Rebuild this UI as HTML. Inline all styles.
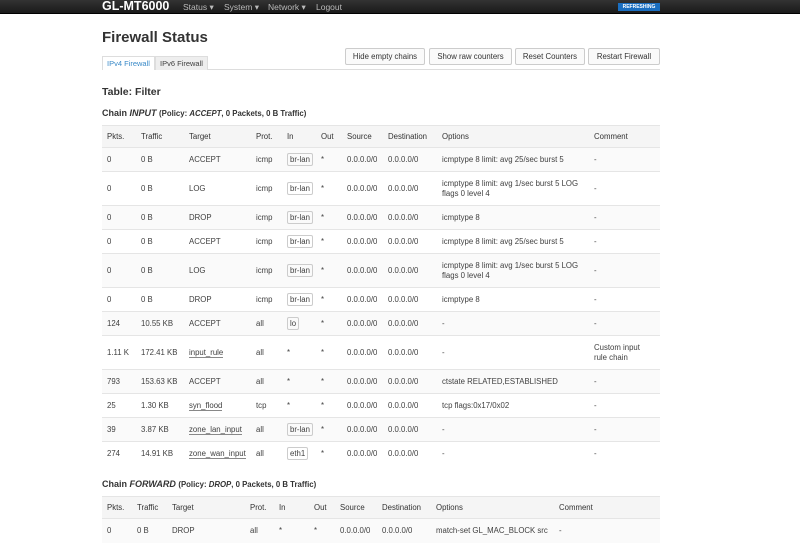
<!DOCTYPE html>
<html><head><meta charset="utf-8"><style>
*{box-sizing:border-box}
body{margin:0;width:800px;height:541px;overflow:hidden;background:#fff;font-family:"Liberation Sans",sans-serif;color:#404040;font-size:8px}
.nav{position:absolute;left:0;top:0;width:800px;height:14px;background:linear-gradient(#333,#1a1a1a);border-bottom:1px solid #000}
.nav .brand{position:absolute;left:102px;top:-1px;color:#fff;font-size:12.5px;font-weight:bold}
.nav .m{position:absolute;top:2px;color:#bbb;font-size:8.5px}
.ref{position:absolute;left:618px;top:3px;width:42px;height:8px;background:#1a6ec0;color:#fff;font-size:5px;font-weight:bold;text-align:center;line-height:8px}
h2{position:absolute;left:102px;top:29px;margin:0;font-size:15px;color:#333}
.tabs{position:absolute;left:102px;top:56px;width:558px;height:14px;border-bottom:1px solid #ddd}
.tab{position:absolute;top:0;height:14px;font-size:7.5px;line-height:14px;padding:0 4px;border:1px solid #ddd;border-bottom:none}
.btn{position:absolute;top:48px;height:17px;border:1px solid #ccc;border-radius:2px;background:#fafafa;font-size:7.8px;line-height:15px;text-align:center;color:#333}
.h3{position:absolute;left:102px;top:86px;font-size:10.5px;font-weight:bold;color:#333}
.h4{position:absolute;left:102px;font-size:9px;font-weight:bold;color:#333}
table{position:absolute;left:102px;width:558px;border-collapse:collapse;table-layout:fixed}
td,th{padding:0 0 0 5px;text-align:left;font-weight:normal;vertical-align:middle;border-top:1px solid #e5e5e5;line-height:10px;font-size:7.8px}
th{background:#f5f5f5;height:22px;color:#333}
tr.s td{height:24px}tr.d td{height:34px}
tbody tr:nth-child(odd) td{background:#fafafa}
.b{border:1px solid #ccc;border-radius:2px;padding:1px 2px}
.u{border-bottom:1px solid #888}
</style></head><body>
<div class="nav"><span class="brand">GL-MT6000</span>
<span class="m" style="left:183px">Status ▾</span><span class="m" style="left:224px">System ▾</span><span class="m" style="left:268px">Network ▾</span><span class="m" style="left:316px">Logout</span>
<div class="ref">REFRESHING</div></div>
<h2>Firewall Status</h2>
<div class="tabs"><span class="tab" style="left:0;color:#3a8ac8;background:#fff">IPv4 Firewall</span><span class="tab" style="left:53px;background:#eee">IPv6 Firewall</span></div>
<div class="btn" style="left:345px;width:80px">Hide empty chains</div>
<div class="btn" style="left:429px;width:83px">Show raw counters</div>
<div class="btn" style="left:515px;width:70px">Reset Counters</div>
<div class="btn" style="left:588px;width:72px">Restart Firewall</div>
<div class="h3">Table: Filter</div>
<div class="h4" style="top:108px">Chain <i>INPUT</i> <span style="font-size:7.8px">(Policy: <i>ACCEPT</i>, 0 Packets, 0 B Traffic)</span></div>
<table style="top:125px"><colgroup><col style="width:34px"><col style="width:48px"><col style="width:67px"><col style="width:31px"><col style="width:34px"><col style="width:26px"><col style="width:41px"><col style="width:54px"><col style="width:152px"><col style="width:71px"></colgroup>
<thead><tr><th>Pkts.</th><th>Traffic</th><th>Target</th><th>Prot.</th><th>In</th><th>Out</th><th>Source</th><th>Destination</th><th>Options</th><th>Comment</th></tr></thead>
<tbody>
<tr class="s"><td>0</td><td>0 B</td><td>ACCEPT</td><td>icmp</td><td><span class="b">br-lan</span></td><td>*</td><td>0.0.0.0/0</td><td>0.0.0.0/0</td><td>icmptype 8 limit: avg 25/sec burst 5</td><td>-</td></tr>
<tr class="d"><td>0</td><td>0 B</td><td>LOG</td><td>icmp</td><td><span class="b">br-lan</span></td><td>*</td><td>0.0.0.0/0</td><td>0.0.0.0/0</td><td>icmptype 8 limit: avg 1/sec burst 5 LOG flags 0 level 4</td><td>-</td></tr>
<tr class="s"><td>0</td><td>0 B</td><td>DROP</td><td>icmp</td><td><span class="b">br-lan</span></td><td>*</td><td>0.0.0.0/0</td><td>0.0.0.0/0</td><td>icmptype 8</td><td>-</td></tr>
<tr class="s"><td>0</td><td>0 B</td><td>ACCEPT</td><td>icmp</td><td><span class="b">br-lan</span></td><td>*</td><td>0.0.0.0/0</td><td>0.0.0.0/0</td><td>icmptype 8 limit: avg 25/sec burst 5</td><td>-</td></tr>
<tr class="d"><td>0</td><td>0 B</td><td>LOG</td><td>icmp</td><td><span class="b">br-lan</span></td><td>*</td><td>0.0.0.0/0</td><td>0.0.0.0/0</td><td>icmptype 8 limit: avg 1/sec burst 5 LOG flags 0 level 4</td><td>-</td></tr>
<tr class="s"><td>0</td><td>0 B</td><td>DROP</td><td>icmp</td><td><span class="b">br-lan</span></td><td>*</td><td>0.0.0.0/0</td><td>0.0.0.0/0</td><td>icmptype 8</td><td>-</td></tr>
<tr class="s"><td>124</td><td>10.55 KB</td><td>ACCEPT</td><td>all</td><td><span class="b">lo</span></td><td>*</td><td>0.0.0.0/0</td><td>0.0.0.0/0</td><td>-</td><td>-</td></tr>
<tr class="d"><td>1.11 K</td><td>172.41 KB</td><td><span class="u">input_rule</span></td><td>all</td><td>*</td><td>*</td><td>0.0.0.0/0</td><td>0.0.0.0/0</td><td>-</td><td style="padding-right:12px">Custom input rule chain</td></tr>
<tr class="s"><td>793</td><td>153.63 KB</td><td>ACCEPT</td><td>all</td><td>*</td><td>*</td><td>0.0.0.0/0</td><td>0.0.0.0/0</td><td>ctstate RELATED,ESTABLISHED</td><td>-</td></tr>
<tr class="s"><td>25</td><td>1.30 KB</td><td><span class="u">syn_flood</span></td><td>tcp</td><td>*</td><td>*</td><td>0.0.0.0/0</td><td>0.0.0.0/0</td><td>tcp flags:0x17/0x02</td><td>-</td></tr>
<tr class="s"><td>39</td><td>3.87 KB</td><td><span class="u">zone_lan_input</span></td><td>all</td><td><span class="b">br-lan</span></td><td>*</td><td>0.0.0.0/0</td><td>0.0.0.0/0</td><td>-</td><td>-</td></tr>
<tr class="s"><td>274</td><td>14.91 KB</td><td><span class="u">zone_wan_input</span></td><td>all</td><td><span class="b">eth1</span></td><td>*</td><td>0.0.0.0/0</td><td>0.0.0.0/0</td><td>-</td><td>-</td></tr>
</tbody></table>
<div class="h4" style="top:479px">Chain <i>FORWARD</i> <span style="font-size:7.8px">(Policy: <i>DROP</i>, 0 Packets, 0 B Traffic)</span></div>
<table style="top:496px"><colgroup><col style="width:30px"><col style="width:35px"><col style="width:78px"><col style="width:29px"><col style="width:35px"><col style="width:26px"><col style="width:42px"><col style="width:54px"><col style="width:123px"><col style="width:106px"></colgroup>
<thead><tr><th>Pkts.</th><th>Traffic</th><th>Target</th><th>Prot.</th><th>In</th><th>Out</th><th>Source</th><th>Destination</th><th>Options</th><th>Comment</th></tr></thead>
<tbody><tr class="s"><td>0</td><td>0 B</td><td>DROP</td><td>all</td><td>*</td><td>*</td><td>0.0.0.0/0</td><td>0.0.0.0/0</td><td>match-set GL_MAC_BLOCK src</td><td>-</td></tr></tbody></table>
</body></html>
